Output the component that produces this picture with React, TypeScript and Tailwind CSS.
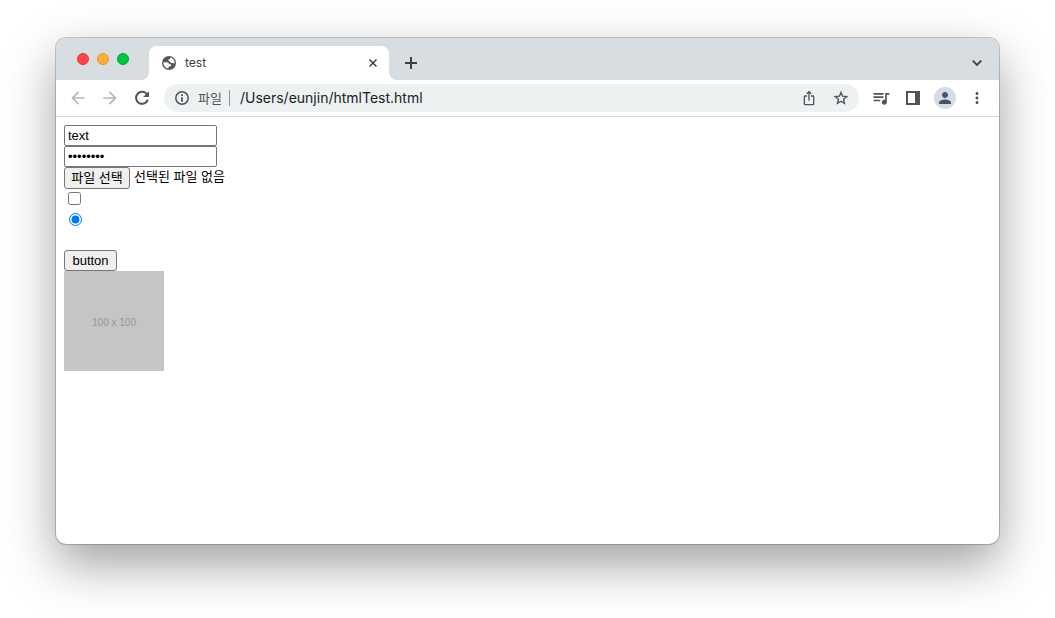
import {
  MdArrowBack,
  MdArrowForward,
  MdIosShare,
  MdMoreVert,
  MdPerson,
  MdQueueMusic,
} from "react-icons/md";

const windowButtons = [
  { name: "Close", color: "bg-[#ff4548] border-[#e2373c]" },
  { name: "Minimize", color: "bg-[#ffae3b] border-[#e2952c]" },
  { name: "Zoom", color: "bg-[#00c543] border-[#00a538]" },
];

const GlobeIcon = () => (
  <svg viewBox="0 0 14 14" className="size-[14px]" aria-hidden="true">
    <circle cx="7" cy="7" r="7" fill="#4f575d" />
    <path
      d="M8.4 1.6C8.5 2.6 8 3 7 3.2c-.9.2-1 1.2-.3 1.7.6.5 1.4.3 1.6 1.2.2.9.9 1.1 1.8.9.9-.2 1.500.2 2.400.4C12.9 4.6 11 2.2 8.4 1.600Z"
      fill="#fff"
    />
    <path
      d="M1.4 6.3h3.2c1.5 0 2.4.8 2.4 2h1.2c.8 0 1.1.6.9 1.2-.2.8-.9 1-1.8 1-.7 0-.9.5-.9 1.1v1C3.500 12.2 1.1 9.7 1.4 6.3Z"
      fill="#fff"
    />
  </svg>
);

const InfoIcon = () => (
  <svg viewBox="0 0 16 16" className="size-4 shrink-0" aria-hidden="true">
    <circle cx="8" cy="8" r="6.2" fill="none" stroke="#50555a" strokeWidth="1.5" />
    <path d="M7.1 4.3h1.8v1.7H7.1ZM7.1 7.2h1.8v4.5H7.1Z" fill="#50555a" />
  </svg>
);

const RefreshIcon = () => (
  <svg viewBox="0 0 20 20" className="size-5" aria-hidden="true">
    <path
      d="M15 6.400A6 6 0 1 0 15.800 11.600"
      fill="none"
      stroke="currentColor"
      strokeWidth="2"
    />
    <path d="M17 3.200v5.900h-5.900Z" fill="currentColor" />
  </svg>
);

const StarIcon = () => (
  <svg viewBox="0 0 16 16" className="size-4" aria-hidden="true">
    <path
      d="m8 2.400 1.600 3.800 4.100.4-3.100 2.700.9 4L8 11.200l-3.500 2.100.9-4-3.100-2.700 4.100-.4Z"
      fill="none"
      stroke="currentColor"
      strokeWidth="1.400"
    />
  </svg>
);

const CloseIcon = () => (
  <svg viewBox="0 0 8 8" className="size-2" aria-hidden="true">
    <path d="m.5.5 7 7M7.500.5l-7 7" stroke="#3c4043" strokeWidth="1.5" />
  </svg>
);

const PlusIcon = () => (
  <svg viewBox="0 0 12 12" className="size-3" aria-hidden="true">
    <path d="M6 0v12M0 6h12" stroke="#3c4043" strokeWidth="2" />
  </svg>
);

const ChevronIcon = () => (
  <svg viewBox="0 0 10 6" className="h-[6px] w-[10px]" aria-hidden="true">
    <path d="m.7.7 4.300 4.300L9.300.7" fill="none" stroke="#3c4043" strokeWidth="1.8" />
  </svg>
);

const SidePanelIcon = () => (
  <svg viewBox="0 0 14 14" className="size-[14px]" aria-hidden="true">
    <path fillRule="evenodd" d="M0 0h14v14H0ZM2 2v10h7V2Z" fill="#50555a" />
  </svg>
);

const TabCurve = ({ className }: { className?: string }) => (
  <svg viewBox="0 0 8 8" className={`size-2 self-end ${className ?? ""}`} aria-hidden="true">
    <path d="M8 0v8H0a8 8 0 0 0 8-8Z" fill="#fff" />
  </svg>
);

const TabStrip = () => (
  <div className="flex h-[42px] shrink-0 bg-[#d8dde1] pt-2">
    <div className="flex w-[85px] items-start gap-2 pt-[7px] pl-[21px]">
      {windowButtons.map((button) => (
        <button
          key={button.name}
          aria-label={button.name}
          className={`size-3 shrink-0 rounded-full border ${button.color}`}
        />
      ))}
    </div>
    <TabCurve />
    <div className="flex w-60 items-center rounded-t-lg bg-white pr-3 pl-[13px]">
      <GlobeIcon />
      <span className="ml-[9px] flex-1 font-['Inter','Noto_Sans_CJK_KR',sans-serif] text-xs text-[#3c4043]">
        test
      </span>
      <button aria-label="Close tab">
        <CloseIcon />
      </button>
    </div>
    <TabCurve className="-scale-x-100" />
    <button aria-label="New tab" className="ml-2 flex items-center">
      <PlusIcon />
    </button>
    <button aria-label="Search tabs" className="mr-[17px] ml-auto flex items-center">
      <ChevronIcon />
    </button>
  </div>
);

const Toolbar = () => (
  <div className="flex h-[37px] shrink-0 items-center border-b border-[#d4d7da] pr-[13px] pl-3 text-[#50555a]">
    <div className="flex w-24 shrink-0 gap-3">
      <button aria-label="Back" className="text-[#b5b7ba]">
        <MdArrowBack size={20} />
      </button>
      <button aria-label="Forward" className="text-[#b5b7ba]">
        <MdArrowForward size={20} />
      </button>
      <button aria-label="Reload">
        <RefreshIcon />
      </button>
    </div>
    <div className="flex h-7 flex-1 items-center rounded-full bg-[#edf1f2] px-[10px] font-['Inter','Noto_Sans_CJK_KR',sans-serif] text-sm">
      <InfoIcon />
      <label
        htmlFor="address"
        className="ml-2 border-r border-[#8e9398] pr-[7px] text-[13px] leading-4 whitespace-nowrap"
      >
        파일
      </label>
      <input
        id="address"
        type="text"
        defaultValue="/Users/eunjin/htmlTest.html"
        className="ml-[10px] min-w-0 flex-1 bg-transparent text-[#202124] outline-none"
      />
      <button aria-label="Share">
        <MdIosShare size={16} />
      </button>
      <button aria-label="Bookmark" className="ml-4">
        <StarIcon />
      </button>
    </div>
    <div className="flex shrink-0 items-center">
      <button aria-label="Media controls" className="ml-3">
        <MdQueueMusic size={20} />
      </button>
      <button aria-label="Side panel" className="ml-[15px]">
        <SidePanelIcon />
      </button>
      <button
        aria-label="Profile"
        className="ml-[14px] flex size-[22px] items-center justify-center rounded-full bg-[#d6dce1] text-[#43546a]"
      >
        <MdPerson size={18} />
      </button>
      <button aria-label="More" className="ml-3">
        <MdMoreVert size={18} />
      </button>
    </div>
  </div>
);

const field = "h-[21px] w-[153px] rounded-xs border border-[#767676] bg-white px-[3px]";
const pushButton =
  "flex items-center justify-center rounded-[3px] border border-[#767676] bg-[#efefef]";

const TestForm = () => (
  <form className="flex flex-1 flex-col items-start p-2 font-['Liberation_Sans','Noto_Sans_CJK_KR',sans-serif] text-[13px] leading-4 text-black">
    <input type="text" aria-label="Text" defaultValue="text" className={field} />
    <input type="password" aria-label="Password" defaultValue="password" className={field} />
    <div className="flex h-[21px] items-start gap-1">
      <input id="file" type="file" className="sr-only" />
      <label htmlFor="file" className={`${pushButton} h-[22px] w-[66px] whitespace-nowrap`}>
        파일 선택
      </label>
      <span className="leading-5">선택된 파일 없음</span>
    </div>
    <div className="flex h-[21px] items-center pl-1">
      <input type="checkbox" aria-label="Checkbox" className="size-[13px]" />
    </div>
    <div className="flex h-[21px] items-center pl-[5px]">
      <input type="radio" aria-label="Radio" defaultChecked className="size-[13px]" />
    </div>
    <button type="button" className={`${pushButton} mt-5 h-[21px] w-[53px]`}>
      button
    </button>
    <div className="flex size-[100px] items-center justify-center bg-[#c5c5c5] pt-[3px] text-[10px] text-[#969696]">
      100 x 100
    </div>
  </form>
);

const App = () => {
  return (
    <main className="flex min-h-screen bg-white px-14 pt-[38px] pb-[74px]">
      <div className="flex min-w-0 flex-1 flex-col overflow-hidden rounded-[10px] bg-white shadow-[0_0_0_1px_rgba(0,0,0,0.2),0_20px_50px_rgba(0,0,0,0.38)]">
        <TabStrip />
        <Toolbar />
        <TestForm />
      </div>
    </main>
  );
};

export default App;
